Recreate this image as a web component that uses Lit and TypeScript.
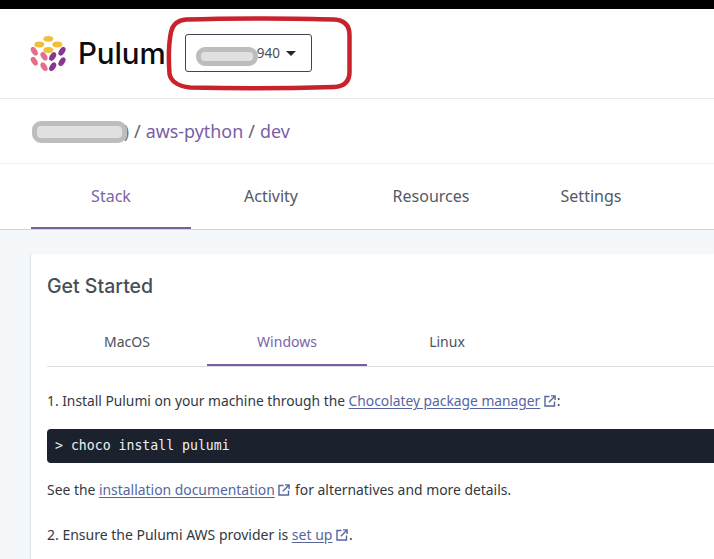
import { LitElement, html, css, svg } from "lit";
import { customElement } from "lit/decorators.js";

const ext = html`<svg class="ext" viewBox="0 0 12 12" width="12" height="12" fill="none" stroke="currentColor" stroke-width="1.4"><path d="M5.500 1.500H1v9.500h9.500V6.500"/><path d="M4.800 7.200 10.600 1.400M7 .9h4.100V5"/></svg>`;

const seeds: [number, number, number, string][] = [
  [48.3, 38.3, 0, "#f0c03c"], [39.3, 44, 0, "#f0c03c"], [57.3, 44, 0, "#f0c03c"], [48.3, 49.5, 0, "#f0c03c"],
  [34.3, 50.7, 58, "#e0708c"], [34.3, 60.7, 58, "#e0708c"], [44, 55.7, 58, "#e0708c"], [44, 66.3, 58, "#e0708c"],
  [62, 50.7, -58, "#86388f"], [62, 61.2, -58, "#86388f"], [52.7, 56, -58, "#86388f"], [52.7, 66.3, -58, "#86388f"],
];

@customElement("app-root")
export class AppRoot extends LitElement {
  static styles = css`
    :host { display: block; width: 714px; height: 559px; overflow: hidden; position: relative; background: #f5f8fb;
      font-family: "Noto Sans", "Open Sans", sans-serif; color: #3f4650; }
    .topbar { height: 9px; background: #000; }
    .header { height: 89px; background: #fff; border-bottom: 1px solid #e8eaed; display: flex; align-items: center; padding-left: 30px; }
    .logo { display: block; width: 36px; height: 46px; flex: none; }
    .brand { font: 500 29.5px/1 "Inter", "Roboto", sans-serif; color: #0c0c0e; margin-left: 12px; width: 89px; white-space: nowrap; letter-spacing: -0.1px; }
    .select { width: 127px; height: 38px; box-sizing: border-box; border: 1px solid #4a3f55; border-radius: 3px; margin-left: 18px; margin-top: -1px;
      display: flex; align-items: center; justify-content: flex-end; gap: 6px; padding-right: 15px; font-size: 13.5px; color: #4a4f57; }
    .caret { width: 0; height: 0; border: 5.5px solid transparent; border-top: 5.5px solid #23262b; border-bottom: 0; }
    .crumbs { height: 64px; background: #fff; border-bottom: 1px solid #eceef0; display: flex; align-items: center;
      padding-left: 31px; font-size: 17.9px; gap: 5px; color: #5c6470; }
    .crumbs .spacer { width: 98px; color: #777; text-align: right; }
    .crumbs a { color: #7a5da6; }
    .tabs { height: 65px; background: #fff; border-bottom: 1px solid #d2d6dc; display: flex; padding-left: 31px; }
    .tab { width: 160px; height: 65px; box-sizing: border-box; display: flex; align-items: center; justify-content: center; font-size: 16px; color: #525a66; border-bottom: 2px solid transparent; }
    .tab.on { color: #7b63a8; border-bottom-color: #7a5e9f; }
    .main { padding: 24px 0 0 31px; }
    .card { background: #fff; border-radius: 3px 0 0 0; box-shadow: -1px 0 1px #dde3ea; padding: 0 0 0 16px; height: 320px; }
    h2 { margin: 0; height: 64px; box-sizing: border-box; padding-top: 2px; display: flex; align-items: center; font: 500 19.5px/1 "Inter", "Lato", sans-serif; color: #474e58; }
    .subtabs { display: flex; height: 48px; border-bottom: 1px solid #dcdfe3; }
    .subtab { width: 160px; height: 48px; box-sizing: border-box; display: flex; align-items: center; justify-content: center; font-size: 14px; color: #4a515c; border-bottom: 2px solid transparent; }
    .subtab.on { color: #7b63a8; border-bottom-color: #7a5e9f; }
    p { margin: 0; font-size: 13.8px; line-height: 20px; color: #33383f; white-space: nowrap; }
    .p1 { margin-top: 24px; }
    .p2 { margin-top: 17px; font-size: 13.9px; }
    .p3 { margin-top: 25px; font-size: 14px; }
    p a { color: #56659e; text-decoration: underline; text-underline-offset: 2px; }
    .ext { color: #56659e; vertical-align: -1px; margin: 0 1px 0 0; }
    .code { margin-top: 18px; height: 34px; background: #1b212d; border-radius: 4px 0 0 4px; display: flex; align-items: center; padding-left: 8px;
      font: 13.2px/1 "DejaVu Sans Mono", "Liberation Mono", monospace; color: #eef0f3; white-space: pre; }
    .blur { position: absolute; background: #e0e0e0; border: 5px solid #bdbdbd; border-radius: 9px; box-sizing: border-box; filter: blur(0.7px); }
    .b1 { left: 196px; top: 47px; width: 62px; height: 19px; }
    .b2 { left: 32px; top: 121px; width: 95px; height: 22px; }
    .ring { position: absolute; left: 0; top: 0; pointer-events: none; }
  `;

  render() {
    return html`
      <div class="topbar"></div>
      <div class="header">
        <svg class="logo" viewBox="30 30.5 36 46" aria-hidden="true">
          ${seeds.map(([x, y, r, c]) => svg`<ellipse cx=${x} cy=${y} rx=${r === 0 ? 5 : 4.8} ry=${r === 0 ? 2.9 : 2.8} fill=${c} transform="rotate(${r} ${x} ${y})"/>`)}
        </svg>
        <div class="brand">Pulum</div>
        <div class="select"><span>940</span><span class="caret"></span></div>
      </div>
      <div class="crumbs"><span class="spacer">)</span><span>/</span><a>aws-python</a><span>/</span><a>dev</a></div>
      <div class="tabs">
        <div class="tab on">Stack</div><div class="tab">Activity</div><div class="tab">Resources</div><div class="tab">Settings</div>
      </div>
      <div class="main">
        <div class="card">
          <h2>Get Started</h2>
          <div class="subtabs">
            <div class="subtab">MacOS</div><div class="subtab on">Windows</div><div class="subtab">Linux</div>
          </div>
          <p class="p1">1. Install Pulumi on your machine through the <a>Chocolatey package manager</a> ${ext}:</p>
          <div class="code">&gt; choco install pulumi</div>
          <p class="p2">See the <a>installation documentation</a> ${ext} for alternatives and more details.</p>
          <p class="p3">2. Ensure the Pulumi AWS provider is <a>set up</a> ${ext}.</p>
        </div>
      </div>
      <div class="blur b1"></div>
      <div class="blur b2"></div>
      <svg class="ring" width="714" height="559" fill="none">
        <path d="M186 19.500 C230 18 300 18 334 19.500 C344 20 349.500 25 349.500 35 L349.500 72 C349.500 82 344 86.500 334 87 C300 88 230 88.500 190 87.500 C178 86.500 171 81 169.500 74 C168.500 60 169 42 171 32 C173 24 178 20 186 19.500Z" stroke="#c8232c" stroke-width="4.500"/>
      </svg>
    `;
  }
}
